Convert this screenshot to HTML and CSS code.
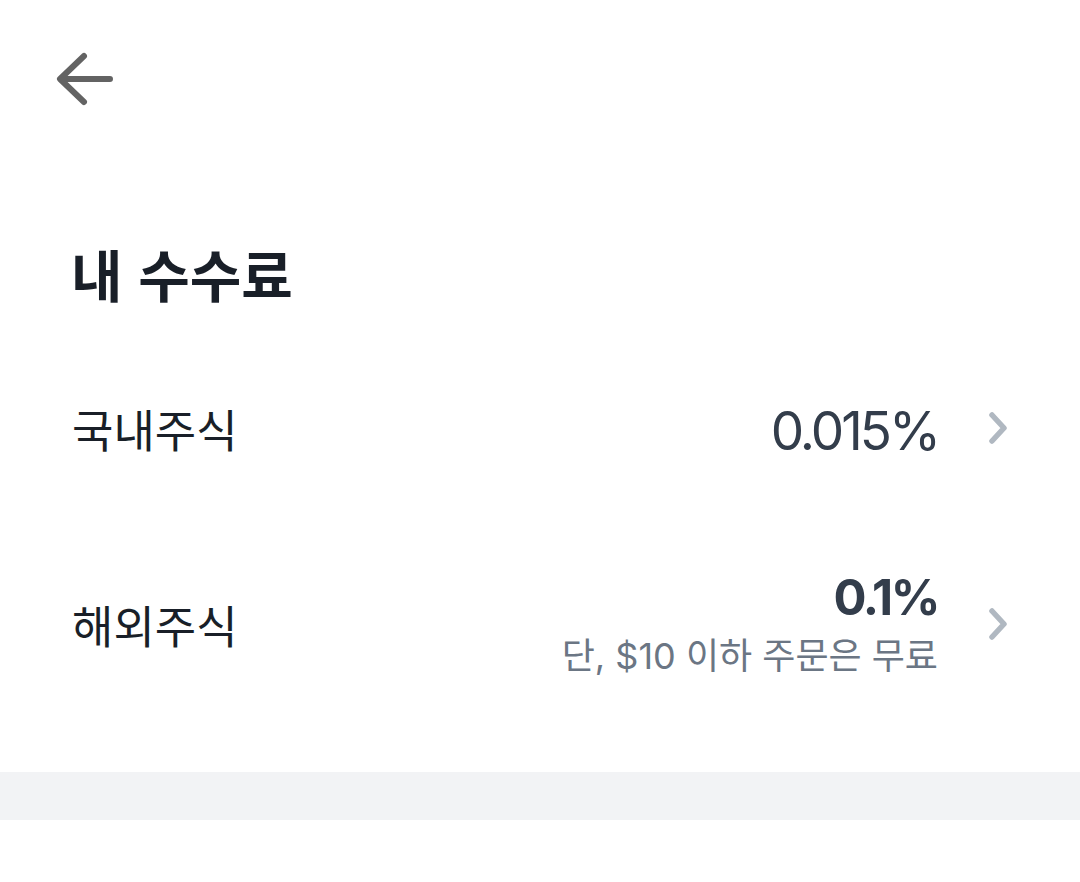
FILE: index.html
```html
<!DOCTYPE html>
<html lang="ko">
<head>
<meta charset="utf-8">
<link rel="stylesheet" href="styles.css">
</head>
<body>
<div class="page">
  <header class="topbar">
    <button class="back" aria-label="뒤로">
      <svg width="64" height="64" viewBox="0 0 64 64">
        <path d="M30 6 L6 29 L30 52 M8 29 H56" fill="none" stroke="#636363" stroke-width="6" stroke-linecap="round" stroke-linejoin="round"/>
      </svg>
    </button>
  </header>
  <h1 class="title">내 수수료</h1>
  <ul class="list">
    <li class="row row-1">
      <span class="label">국내주식</span>
      <span class="value-wrap">
        <span class="value">0.015%</span>
      </span>
      <svg class="chev" width="20" height="32" viewBox="0 0 20 32"><path d="M4 3 L16 16 L4 29" fill="none" stroke="#b0b8c1" stroke-width="5.5" stroke-linecap="round" stroke-linejoin="round"/></svg>
    </li>
    <li class="row row-2">
      <span class="label">해외주식</span>
      <span class="value-wrap">
        <span class="value bold">0.1%</span>
        <span class="sub">단, $10 이하 주문은 무료</span>
      </span>
      <svg class="chev" width="20" height="32" viewBox="0 0 20 32"><path d="M4 3 L16 16 L4 29" fill="none" stroke="#b0b8c1" stroke-width="5.5" stroke-linecap="round" stroke-linejoin="round"/></svg>
    </li>
  </ul>
  <div class="divider"></div>
</div>
</body>
</html>
```
FILE: styles.css
```css
html, body {
  margin: 0;
  padding: 0;
  background: #ffffff;
}
body {
  font-family: "Noto Sans CJK KR", "Noto Sans", sans-serif;
  color: #191f28;
}
.page {
  width: 1080px;
  height: 882px;
  overflow: hidden;
}
.topbar {
  height: 162px;
  padding: 50px 0 0 54px;
  box-sizing: border-box;
}
.back {
  border: 0;
  background: none;
  padding: 0;
  width: 64px;
  height: 64px;
  display: block;
}
.back svg { display: block; }
.title {
  margin: 0;
  padding: 66px 0 0 71px;
  font-size: 56px;
  font-weight: 700;
  line-height: 90px;
  height: 178px;
  box-sizing: border-box;
  color: #191f28;
  letter-spacing: 0;
}
.list {
  list-style: none;
  margin: 0;
  padding: 0 0 40px;
}
.row {
  display: flex;
  align-items: center;
  padding: 0 72px 0 72px;
}
.row-1 { height: 176px; }
.row-2 { height: 216px; }
.label {
  font-size: 45px;
  color: #191f28;
  flex: 1;
}
.value-wrap {
  display: flex;
  flex-direction: column;
  align-items: flex-end;
}
.value {
  font-family: Inter, "Noto Sans CJK KR", sans-serif;
  font-size: 53px;
  font-weight: 400;
  color: #333d4b;
  letter-spacing: -3px;
  line-height: 60px;
  margin-top: 6px;
}
.value.bold {
  font-weight: 700;
  font-size: 49px;
  letter-spacing: -2.5px;
  margin-top: 0;
  margin-bottom: 4px;
}
.sub {
  font-family: Inter, "Noto Sans CJK KR", sans-serif;
  font-size: 36px;
  color: #6b7684;
  line-height: 48px;
}
.chev {
  margin-left: 50px;
  display: block;
}
.divider {
  height: 48px;
  background: #f2f3f5;
}
```
